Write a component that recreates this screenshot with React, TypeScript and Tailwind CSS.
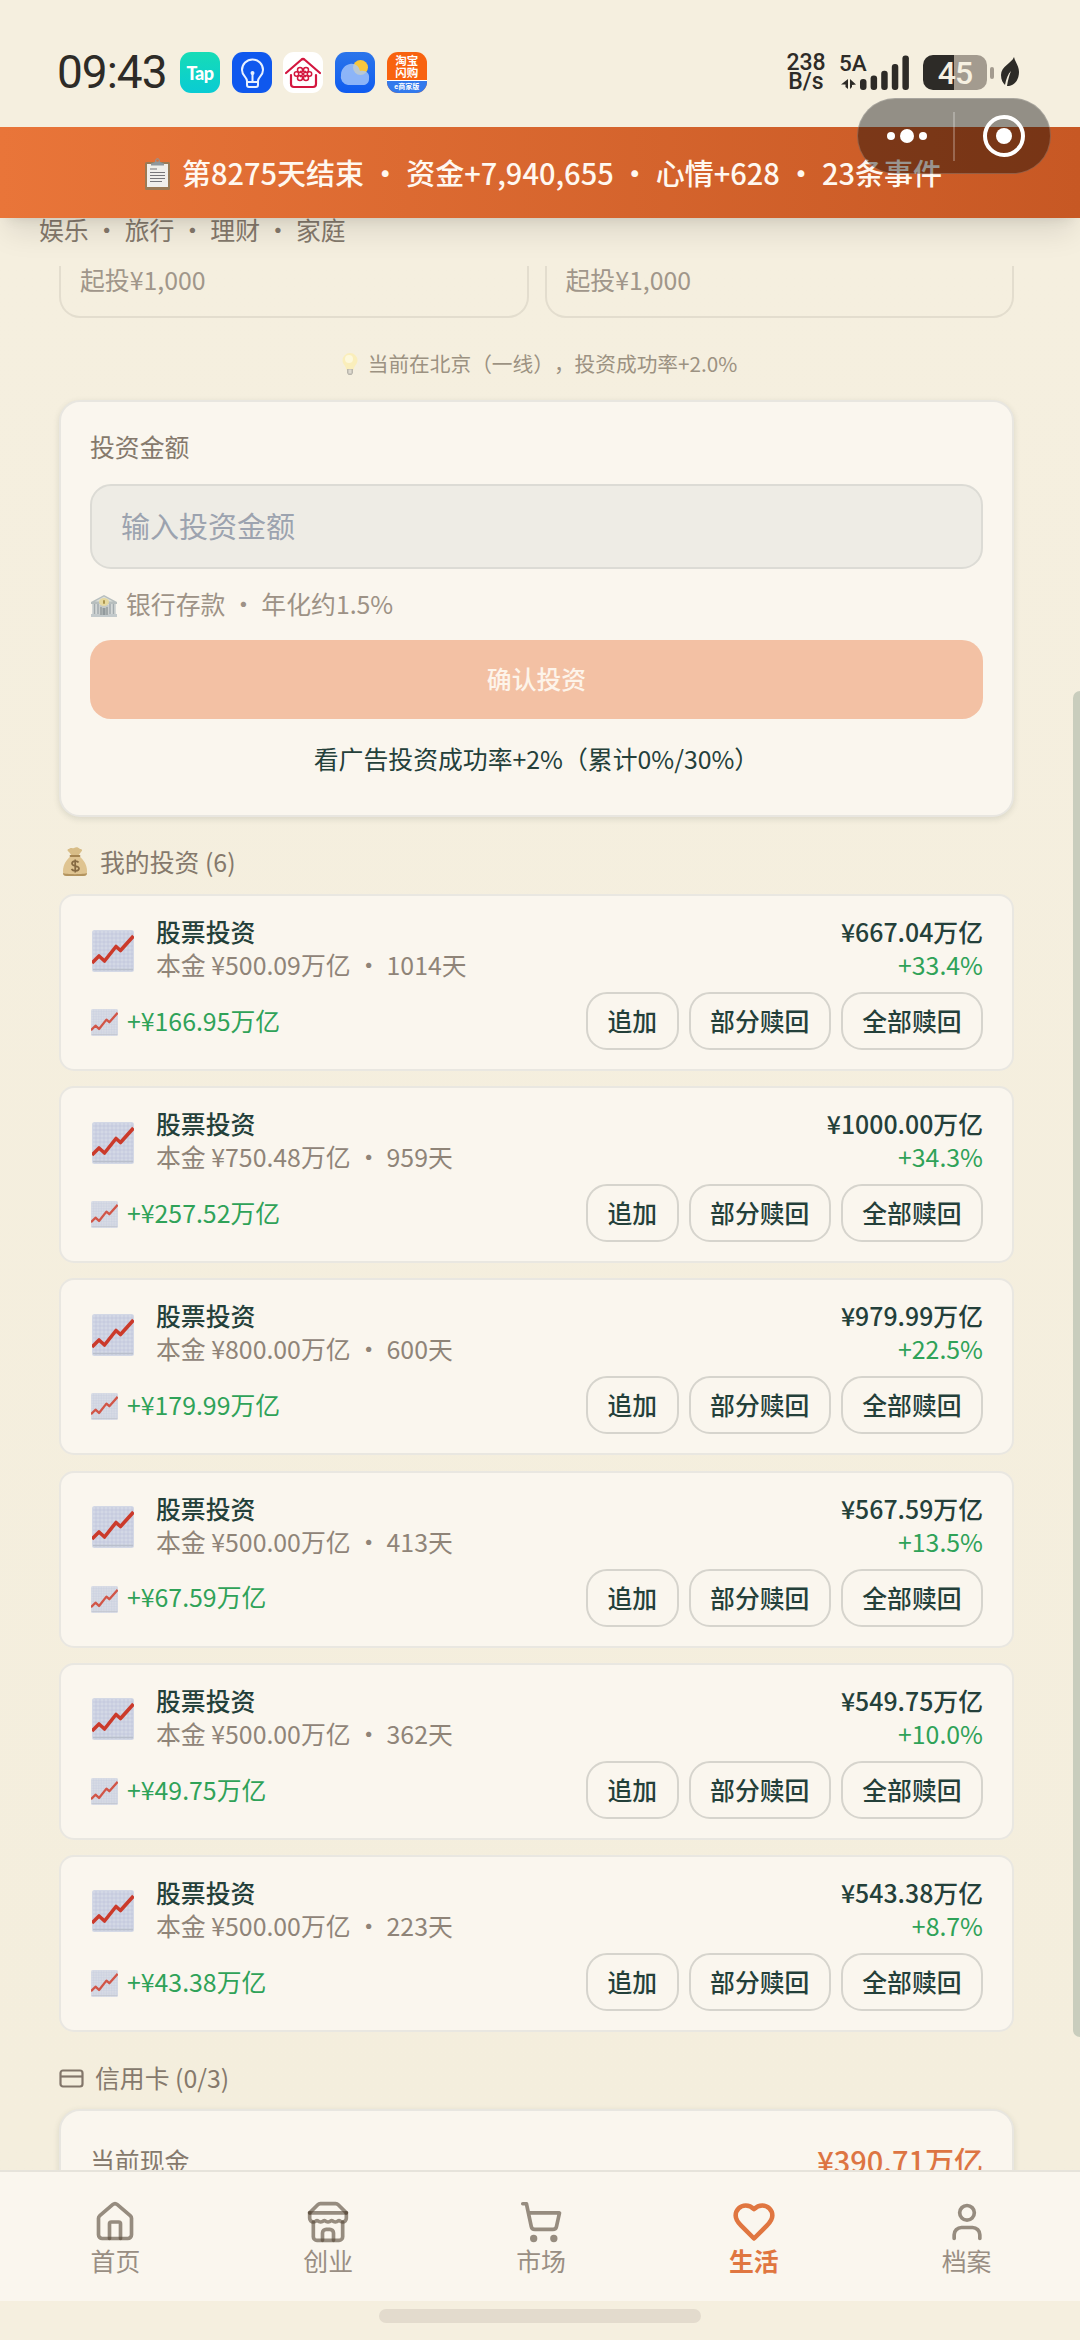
import type { ReactNode } from 'react'

type Investment = {
  principal: string
  days: number
  value: string
  rate: string
  profit: string
}

const investments: Investment[] = [
  { principal: '¥500.09万亿', days: 1014, value: '¥667.04万亿', rate: '+33.4%', profit: '+¥166.95万亿' },
  { principal: '¥750.48万亿', days: 959, value: '¥1000.00万亿', rate: '+34.3%', profit: '+¥257.52万亿' },
  { principal: '¥800.00万亿', days: 600, value: '¥979.99万亿', rate: '+22.5%', profit: '+¥179.99万亿' },
  { principal: '¥500.00万亿', days: 413, value: '¥567.59万亿', rate: '+13.5%', profit: '+¥67.59万亿' },
  { principal: '¥500.00万亿', days: 362, value: '¥549.75万亿', rate: '+10.0%', profit: '+¥49.75万亿' },
  { principal: '¥500.00万亿', days: 223, value: '¥543.38万亿', rate: '+8.7%', profit: '+¥43.38万亿' },
]

function ChartIcon({ className }: { className: string }) {
  return (
    <svg viewBox="0 0 42 42" className={className}>
      <rect width="42" height="42" rx="2.5" fill="#d3d8e5" />
      <path
        d="M4 1v40M8 1v40M12 1v40M16 1v40M20 1v40M24 1v40M28 1v40M32 1v40M36 1v40M40 1v40M1 4h40M1 8h40M1 12h40M1 16h40M1 20h40M1 24h40M1 28h40M1 32h40M1 36h40"
        stroke="#bcc5da"
        strokeWidth="0.6"
      />
      <path d="M1 39.500h40" stroke="#b9bfcc" strokeWidth="1.500" />
      <path d="M0 33l7-7 5.500 5L24 16.500l4.500 4L41.500 6" fill="none" stroke="#cb3a2b" strokeWidth="3.600" strokeLinejoin="round" />
    </svg>
  )
}

function ClipboardIcon() {
  return (
    <svg viewBox="0 0 27 33" className="h-[33px] w-[27px]">
      <rect x="1" y="5" width="25" height="28" rx="1.5" fill="#9b7a55" />
      <rect x="3" y="7" width="21" height="23" fill="#f0efeb" />
      <path d="M6 12h7M6 15.5h15M6 18.5h15M6 21.5h15M6 24.5h12" stroke="#77777a" strokeWidth="1.2" />
      <path d="M7 8.500V6.500L11 5c0-5 5-5 5 0l4 1.500v2z" fill="#8f979b" />
      <circle cx="13.500" cy="3.500" r="1.300" fill="#d8703c" />
    </svg>
  )
}

function BulbIcon() {
  return (
    <svg viewBox="0 0 18 24" className="h-6 w-[18px]">
      <path d="M9 1a7.500 7.500 0 0 0-7.500 7.500c0 4 3.500 5 4 9.500h7c.5-4.500 4-5.500 4-9.500A7.500 7.500 0 0 0 9 1z" fill="#faeebb" />
      <circle cx="8" cy="7" r="4" fill="#fdf8dc" />
      <path d="M6 17h6v4l-1.500 2h-3L6 21z" fill="#b9b6ad" />
      <path d="M7.500 17.500h3v4h-3z" fill="#dedad0" />
    </svg>
  )
}

function BankIcon() {
  return (
    <svg viewBox="0 0 28 22" className="mt-1 h-[22px] w-7">
      <path d="M1 19h26v3H1z" fill="#c3cacc" />
      <path d="M2 8h24v11H2z" fill="#d3d7d6" />
      <path d="M4.500 9v10M8 9v10M20 9v10M23.500 9v10" stroke="#a3abae" strokeWidth="1.500" />
      <path d="M9.500 10h9v10h-9z" fill="#c4c9c8" />
      <path d="M11 12v8M17 12v8" stroke="#8f9799" strokeWidth="1.300" />
      <path d="M12.500 13h3v7h-3z" fill="#929a9d" />
      <path d="M14 0l13 7v2H1V7z" fill="#b7bebe" />
      <path d="M14 1.500l9 5H5z" fill="#dcdfda" />
      <ellipse cx="14" cy="7" rx="5" ry="4" fill="#e6d9a0" />
      <path d="M14 5.200v3.600" stroke="#a48e48" strokeWidth="1.800" />
    </svg>
  )
}

function MoneyBagIcon() {
  return (
    <svg viewBox="0 0 26 30" className="h-[30px] w-[26px]">
      <path d="M7 2c2-2 3 0 5-1s4-1 6 1c2 0 3 1 1 3l-3 4H10L7 5C5 4 5 2 7 2z" fill="#d8bd87" />
      <path d="M9 9h8c5 4 8 9 8 15 0 4-1 5-4 5H5c-3 0-4-1-4-5C1 18 4 13 9 9z" fill="#dfc491" />
      <path d="M1 26c0 2 1 3 4 3h16c3 0 4-1 4-3-2 1.500-22 1.500-24 0z" fill="#b3945f" />
      <path d="M8.500 9h9" stroke="#a58551" strokeWidth="1.800" strokeLinecap="round" />
      <path d="M16.500 15.500c-1-2-6.500-2-6.500 1 0 3.500 7 1.500 7 5 0 3-6 3-7.500.5M13.200 12.500v13" fill="none" stroke="#866a42" strokeWidth="1.700" />
    </svg>
  )
}

function AppIcons() {
  return (
    <div className="flex gap-[11.700px]">
      <div className="flex h-[41px] w-10 items-center justify-center rounded-[11px] bg-linear-to-b from-[#17dcb6] to-[#0acbd3]">
        <span className="font-['Lato',sans-serif] text-[18px] leading-none font-black tracking-[-0.5px] text-white">Tap</span>
      </div>
      <svg viewBox="0 0 40 41" className="h-[41px] w-10 rounded-[11px] bg-[#0f58ee]" fill="none" stroke="#e8f1ff" strokeWidth="2">
        <path d="M15 29c0-4-5-5-5-11a10.500 10.500 0 0 1 21 0c0 6-5 7-5 11v4c0 1-1 2-2 2h-7c-1 0-2-1-2-2zM15 30h11" />
        <path d="M20.500 29v-7" />
        <circle cx="20.500" cy="21" r="2" fill="#e8f1ff" stroke="none" />
      </svg>
      <svg viewBox="0 0 40 41" className="h-[41px] w-10 rounded-[11px] bg-white" fill="none" stroke="#d3173f" strokeWidth="2.200">
        <path d="M3 21L18 8q2-2 4 0l15 13M8 23v9q0 3 3 3h19q3 0 3-3v-9" strokeLinecap="round" />
        <g strokeWidth="1.500">
          <circle cx="17" cy="18" r="2.500" />
          <circle cx="23" cy="18" r="2.500" />
          <circle cx="17" cy="26" r="2.500" />
          <circle cx="23" cy="26" r="2.500" />
          <circle cx="13.500" cy="22" r="2.200" />
          <circle cx="26.500" cy="22" r="2.200" />
          <path d="M17 19l6 6M23 19l-6 6" />
        </g>
      </svg>
      <svg viewBox="0 0 40 41" className="h-[41px] w-10 rounded-[11px] bg-linear-to-b from-[#2b75ea] to-[#0f5bf0]">
        <circle cx="25.500" cy="15.500" r="7.500" fill="#f7c73c" />
        <path d="M13 33a8 8 0 0 1-7-10c0-6 4-10 9-11 5-1 9 2 10 7 6-1 10 2 9 8 0 4-3 6-6 6z" fill="#a9c8fa" fillOpacity="0.800" />
      </svg>
      <div className="flex h-[41px] w-10 flex-col items-center overflow-hidden rounded-[11px] bg-[#f8620f] text-white">
        <span className="mt-[3px] text-[11.500px] leading-[12px] font-bold">淘宝</span>
        <span className="text-[11.500px] leading-[12px] font-bold">闪购</span>
        <span className="mt-px w-full flex-1 rounded-t-[50%/3px] border-t border-white bg-[#3279ec] text-center text-[7px] leading-[12px] font-bold whitespace-nowrap">e商家版</span>
      </div>
    </div>
  )
}

function StatusBar() {
  return (
    <header className="flex h-[127px] shrink-0 items-start pt-[52px] pr-[61px] pl-[57px] font-['Roboto','Noto_Sans_CJK_SC',sans-serif] text-[#2d2b27]">
      <span className="w-[123px] text-[46px] leading-[41px] tracking-[-1px]">09:43</span>
      <AppIcons />
      <div className="ml-auto flex">
        <div className="w-10 pt-px text-center text-[23px] leading-[19px] font-medium">
          <div>238</div>
          <div>B/s</div>
        </div>
        <div className="relative ml-[13px] h-[41px] w-[72px]">
          <span className="block text-[22.500px] leading-[22px] font-medium">5A</span>
          <svg viewBox="0 0 72 41" className="absolute inset-0 h-[41px] w-[72px]" fill="#2d2b27">
            <path d="M2 32.500l7-5.500v10l-2.500-2v-2.500zM17 32.500l-6-5.500v10l2-2v-2z" />
            <rect x="21" y="27" width="6.500" height="11" rx="3" />
            <rect x="31.600" y="23.500" width="6.500" height="14.500" rx="3" />
            <rect x="42.200" y="18.700" width="6.500" height="19.300" rx="3" />
            <rect x="52.800" y="12" width="6.500" height="26" rx="3" />
            <rect x="63.400" y="3.400" width="6.500" height="34.600" rx="3" />
          </svg>
        </div>
        <div className="mt-[3px] ml-[12px] flex h-[35px] w-16 items-center justify-center rounded-[10px] bg-linear-to-r from-[#2d2b27] from-48% to-[#a39b8f] to-48% text-[32px] font-medium tracking-[-1px] text-[#f6f0e1]">
          45
        </div>
        <div className="mt-[15px] ml-[3px] h-3 w-1 rounded-full bg-[#a39b8f]" />
        <svg viewBox="0 0 18 30" className="mt-[5px] ml-[7px] h-[30px] w-[18px]">
          <path d="M13 0c-2 6-13 9-13 18 0 5 2 8 4 10 1-6 3-11 6-14-2 5-3 9-4 15 8 0 12-7 12-14 0-6-4-10-5-15z" fill="#2d2b27" />
        </svg>
      </div>
    </header>
  )
}

function MiniProgramCapsule() {
  return (
    <div className="absolute top-[98px] left-[857px] z-20 flex h-[76px] w-[194px] items-center rounded-full border border-white/20 bg-black/40">
      <div className="flex flex-1 items-center justify-center gap-[5px] pl-[3px]">
        <i className="size-2 rounded-full bg-white" />
        <i className="size-3.5 rounded-full bg-white" />
        <i className="size-2 rounded-full bg-white" />
      </div>
      <div className="h-[49px] w-0.5 bg-white/25" />
      <div className="flex flex-1 justify-center pl-1">
        <div className="flex size-[42px] items-center justify-center rounded-full border-4 border-white">
          <i className="size-4 rounded-full bg-white" />
        </div>
      </div>
    </div>
  )
}

function OutlineButton({ children }: { children: ReactNode }) {
  return (
    <button className="h-[58px] rounded-[21px] border-2 border-[#d6d4cd] px-[19.500px] pb-px text-[24.800px] leading-none font-medium whitespace-nowrap">
      {children}
    </button>
  )
}

function InvestForm() {
  return (
    <section className="mt-[22px] h-[417px] rounded-[21px] border-2 border-[#e8e6e0] bg-[#faf6ee] px-[29px] pt-[26px] shadow-[0_2px_6px_rgba(60,70,60,0.14)]">
      <div className="h-9 leading-9 text-[#85796c]">投资金额</div>
      <div className="mt-5 flex h-[85px] items-center rounded-[21px] border-2 border-[#dcdbd5] bg-[#eeece5] px-[29px] pb-px text-[29px] text-[#9ca3af]">
        输入投资金额
      </div>
      <div className="mt-[17px] flex h-9 items-center gap-2 text-[#9d9286]">
        <BankIcon />
        <span>银行存款 · 年化约1.5%</span>
      </div>
      <button className="mt-[18px] flex h-[79px] w-full items-center justify-center rounded-[21px] bg-[#f3c1a4] pb-px font-medium text-[#fdf4ea]">
        确认投资
      </button>
      <div className="mt-[21px] h-9 text-center leading-9">看广告投资成功率+2%（累计0%/30%）</div>
    </section>
  )
}

function InvestmentCard({ item }: { item: Investment }) {
  return (
    <li className="h-[177px] rounded-[15px] border-2 border-[#e9e7e1] bg-[#faf6ee] px-[29px] pt-[19px]">
      <div className="flex items-center leading-[33px]">
        <ChartIcon className="mt-[5px] ml-[2px] size-[42px]" />
        <div className="ml-[22px] flex-1">
          <div className="font-medium">股票投资</div>
          <div className="text-[#8f8478]">本金 {item.principal} · {item.days}天</div>
        </div>
        <div className="text-right">
          <div className="font-medium">{item.value}</div>
          <div className="text-[#2fa258]">{item.rate}</div>
        </div>
      </div>
      <div className="mt-[11px] flex items-center">
        <ChartIcon className="mt-[3px] ml-px size-[27px] opacity-85" />
        <span className="ml-[9px] flex-1 pb-px text-[#2fa258]">{item.profit}</span>
        <div className="flex gap-[10px]">
          <OutlineButton>追加</OutlineButton>
          <OutlineButton>部分赎回</OutlineButton>
          <OutlineButton>全部赎回</OutlineButton>
        </div>
      </div>
    </li>
  )
}

const tabs = [
  {
    label: '首页',
    paths: [
      'M15 21v-8a1 1 0 0 0-1-1h-4a1 1 0 0 0-1 1v8',
      'M3 10a2 2 0 0 1 .709-1.528l7-5.999a2 2 0 0 1 2.582 0l7 5.999A2 2 0 0 1 21 10v9a2 2 0 0 1-2 2H5a2 2 0 0 1-2-2z',
    ],
  },
  {
    label: '创业',
    paths: [
      'm2 7 4.410-4.410A2 2 0 0 1 7.830 2h8.340a2 2 0 0 1 1.420.59L22 7',
      'M4 12v8a2 2 0 0 0 2 2h12a2 2 0 0 0 2-2v-8',
      'M15 22v-4a2 2 0 0 0-2-2h-2a2 2 0 0 0-2 2v4',
      'M2 7h20',
      'M22 7v3a2 2 0 0 1-2 2a2.700 2.700 0 0 1-1.590-.63.7.7 0 0 0-.82 0A2.700 2.700 0 0 1 16 12a2.700 2.700 0 0 1-1.590-.63.7.7 0 0 0-.82 0A2.700 2.700 0 0 1 12 12a2.700 2.700 0 0 1-1.590-.63.7.7 0 0 0-.82 0A2.700 2.700 0 0 1 8 12a2.700 2.700 0 0 1-1.590-.63.7.7 0 0 0-.82 0A2.700 2.700 0 0 1 4 12a2 2 0 0 1-2-2V7',
    ],
  },
  {
    label: '市场',
    paths: [
      'M2.050 2.050h2l2.660 12.420a2 2 0 0 0 2 1.580h9.780a2 2 0 0 0 1.950-1.570l1.650-7.430H5.120',
      'M8 20a1 1 0 1 0 0 2a1 1 0 1 0 0-2',
      'M19 20a1 1 0 1 0 0 2a1 1 0 1 0 0-2',
    ],
  },
  {
    label: '生活',
    active: true,
    paths: [
      'M19 14c1.490-1.460 3-3.210 3-5.500A5.500 5.500 0 0 0 16.500 3c-1.760 0-3 .5-4.500 2-1.500-1.500-2.740-2-4.500-2A5.500 5.500 0 0 0 2 8.500c0 2.300 1.500 4.050 3 5.500l7 7Z',
    ],
  },
  {
    label: '档案',
    paths: ['M19 21v-2a4 4 0 0 0-4-4H9a4 4 0 0 0-4 4v2', 'M12 3a4 4 0 1 0 0 8a4 4 0 1 0 0-8'],
  },
]

function TabBar() {
  return (
    <nav className="flex h-[131px] shrink-0 border-t-2 border-[#e6e3db] bg-[#faf6ee] pt-[28px] pr-[7px] pl-[9px]">
      {tabs.map(tab => (
        <div
          key={tab.label}
          className={`flex flex-1 flex-col items-center ${tab.active ? 'font-bold text-[#e07640]' : 'text-[#998e83]'}`}
        >
          <svg
            viewBox="0 0 24 24"
            className="size-11"
            fill="none"
            stroke={tab.active ? '#e07640' : 'rgba(88,74,58,0.62)'}
            strokeWidth={tab.active ? 2.5 : 2}
            strokeLinecap="round"
            strokeLinejoin="round"
          >
            {tab.paths.map(d => <path key={d} d={d} />)}
          </svg>
          <span className="mt-px leading-[30px]">{tab.label}</span>
        </div>
      ))}
    </nav>
  )
}

export default function App() {
  return (
    <div className="relative flex h-[2340px] w-[1080px] flex-col overflow-hidden bg-[#f5efdf] font-['Noto_Sans_CJK_SC',sans-serif] text-[24.850px] text-[#24403a] [text-spacing-trim:space-all]">
      <StatusBar />

      <div className="z-10 flex h-[91px] shrink-0 items-center bg-linear-to-r from-[#e97539] to-[#c75824] pt-px pl-[144px] text-[29px] font-medium whitespace-nowrap text-[#fff8f0] shadow-[0_20px_30px_-6px_rgba(0,0,0,0.1),0_8px_12px_-8px_rgba(0,0,0,0.1)]">
        <ClipboardIcon />
        <span className="ml-[11px]">第8275天结束 · 资金+7,940,655 · 心情+628 · 23条事件</span>
      </div>
      <MiniProgramCapsule />

      <div className="h-12 shrink-0 pl-[39px] leading-[23px] text-[#85796c]">娱乐 · 旅行 · 理财 · 家庭</div>

      <main className="h-[1904px] shrink-0 overflow-hidden bg-linear-to-b from-[#f5efdf] to-[#f4eedd] pr-[66px] pl-[59px]">
        <div className="grid grid-cols-2 gap-4">
          {['bank', 'fund'].map(id => (
            <div key={id} className="h-[52px] rounded-b-[21px] border-x-2 border-b-2 border-[#e3ddce] pl-[19px] leading-[26px] text-[#a0968a]">
              起投¥1,000
            </div>
          ))}
        </div>

        <div className="mt-8 flex h-7 items-center justify-center gap-[9px] pl-[5px] text-[20.700px] text-[#9c9282]">
          <BulbIcon />
          <span>当前在北京（一线），投资成功率+2.0%</span>
        </div>

        <InvestForm />

        <h2 className="mt-[25px] flex h-10 items-center gap-3 pl-[3px] text-[#85796c]">
          <MoneyBagIcon />
          我的投资 (6)
        </h2>
        <ul className="mt-[12px] flex flex-col gap-[15.200px]">
          {investments.map(item => <InvestmentCard key={item.days} item={item} />)}
        </ul>

        <h2 className="mt-[26px] flex h-10 items-center gap-[11px] text-[#85796c]">
          <svg viewBox="0 0 25 19" className="mt-px h-[19px] w-[25px]" fill="none" stroke="#82766a" strokeWidth="2.200">
            <rect x="1.500" y="1.500" width="22" height="16" rx="2.500" />
            <path d="M1 7.500h23" />
          </svg>
          信用卡 (0/3)
        </h2>
        <section className="mt-[11px] flex h-40 justify-between rounded-t-[21px] border-2 border-[#e8e6e0] bg-[#faf6ee] px-[29px] pt-[29px] leading-10 shadow-[0_2px_6px_rgba(60,70,60,0.14)]">
          <span className="text-[#85796c]">当前现金</span>
          <span className="text-[29px] font-medium text-[#dd7543]">¥390.71万亿</span>
        </section>
      </main>

      <TabBar />
      <div className="mt-2 h-3.5 w-[322px] shrink-0 self-center rounded-full bg-[#e3dbcd]" />

      <div className="absolute top-[691px] right-0 h-[1346px] w-[7.500px] rounded-l-full bg-[#c9cdbd]" />
    </div>
  )
}
